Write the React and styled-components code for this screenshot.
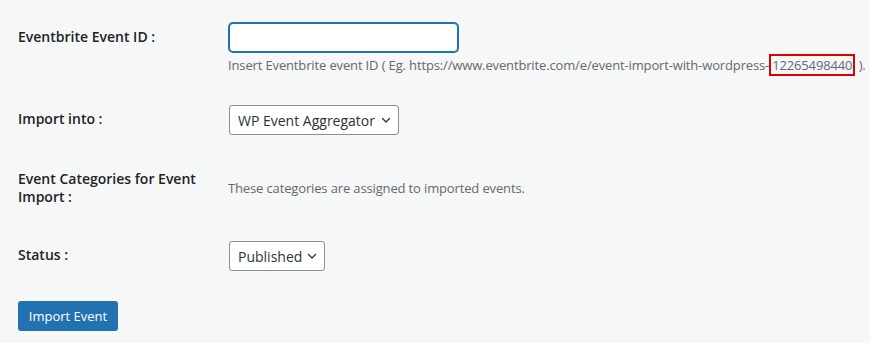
import styled, { createGlobalStyle } from "styled-components";

const GlobalStyle = createGlobalStyle`
    body{
        margin: 0;
        background: #f6f7f7;
        font-family: "Open Sans", "Noto Sans", sans-serif;
        color: #1d2327;
    }
`;

const Chevron = () => (
    <svg width="12" height="12" viewBox="0 0 12 12" fill="none">
        <path d="M2.5 4.5 L6 8 L9.5 4.5" stroke="#2c3338" strokeWidth="1.3" strokeLinecap="round" strokeLinejoin="round" />
    </svg>
);

const Dropdown = ({ value, width }) => (
    <SelectBox $width={width}>
        <span>{value}</span>
        <Chevron />
    </SelectBox>
);

const App = () => {

    return (
        <>
            <GlobalStyle />
            <FormStyled>
                <Row>
                    <Label>Eventbrite Event ID :</Label>
                    <Field>
                        <TextInput type="text" autoFocus />
                        <Description>
                            Insert Eventbrite event ID ( Eg. https://www.eventbrite.com/e/event-import-with-wordpress-<Mark>12265498440</Mark> ).
                        </Description>
                    </Field>
                </Row>

                <Row>
                    <Label>Import into :</Label>
                    <Field>
                        <Dropdown value="WP Event Aggregator" width="170px" />
                    </Field>
                </Row>

                <Row>
                    <Label>Event Categories for Event Import :</Label>
                    <Field>
                        <Description $flat>These categories are assigned to imported events.</Description>
                    </Field>
                </Row>

                <Row>
                    <Label>Status :</Label>
                    <Field>
                        <Dropdown value="Published" width="96px" />
                    </Field>
                </Row>

                <Button>Import Event</Button>
            </FormStyled>
        </>
    );
};

const FormStyled = styled.div`
    padding: 8px 0 0 18px;
    width: 852px;
    box-sizing: border-box;
`;

const Row = styled.div`
    display: grid;
    grid-template-columns: 210px 1fr;
    align-items: center;
`;

const Label = styled.div`
    align-self: start;
    padding: 20px 10px 20px 0;
    font-size: 14px;
    font-weight: 600;
    line-height: 18px;
    color: #1d2327;
    width: 190px;
`;

const Field = styled.div`
    padding: 15px 0;
`;

const TextInput = styled.input`
    display: block;
    width: 229px;
    height: 29px;
    box-sizing: border-box;
    margin: 0 0 0 1px;
    border: 1px solid #2271b1;
    box-shadow: 0 0 0 1px #2271b1;
    border-radius: 4px;
    background: #fff;
    outline: none;
    font-size: 14px;
    padding: 0 8px;
`;

const Description = styled.p`
    margin: ${(p) => (p.$flat ? "0" : "4px 0 0")};
    font-size: 13px;
    line-height: 19px;
    color: #646970;
    white-space: nowrap;
    letter-spacing: -0.14px;
`;

const Mark = styled.span`
    border: 2px solid #e10000;
    padding: 0 1px;
`;

const SelectBox = styled.div`
    display: flex;
    align-items: center;
    justify-content: space-between;
    width: ${(p) => p.$width};
    height: 30px;
    box-sizing: border-box;
    margin-left: 1px;
    padding: 0 6px 0 8px;
    border: 1px solid #8c8f94;
    border-radius: 3px;
    background: #fff;
    font-size: 14px;
    color: #2c3338;
`;

const Button = styled.button`
    margin-top: 15px;
    width: 100px;
    height: 30px;
    border: none;
    border-radius: 3px;
    background: #2271b1;
    color: #fff;
    font-family: inherit;
    font-size: 13px;
    cursor: pointer;
`;

export default App;
